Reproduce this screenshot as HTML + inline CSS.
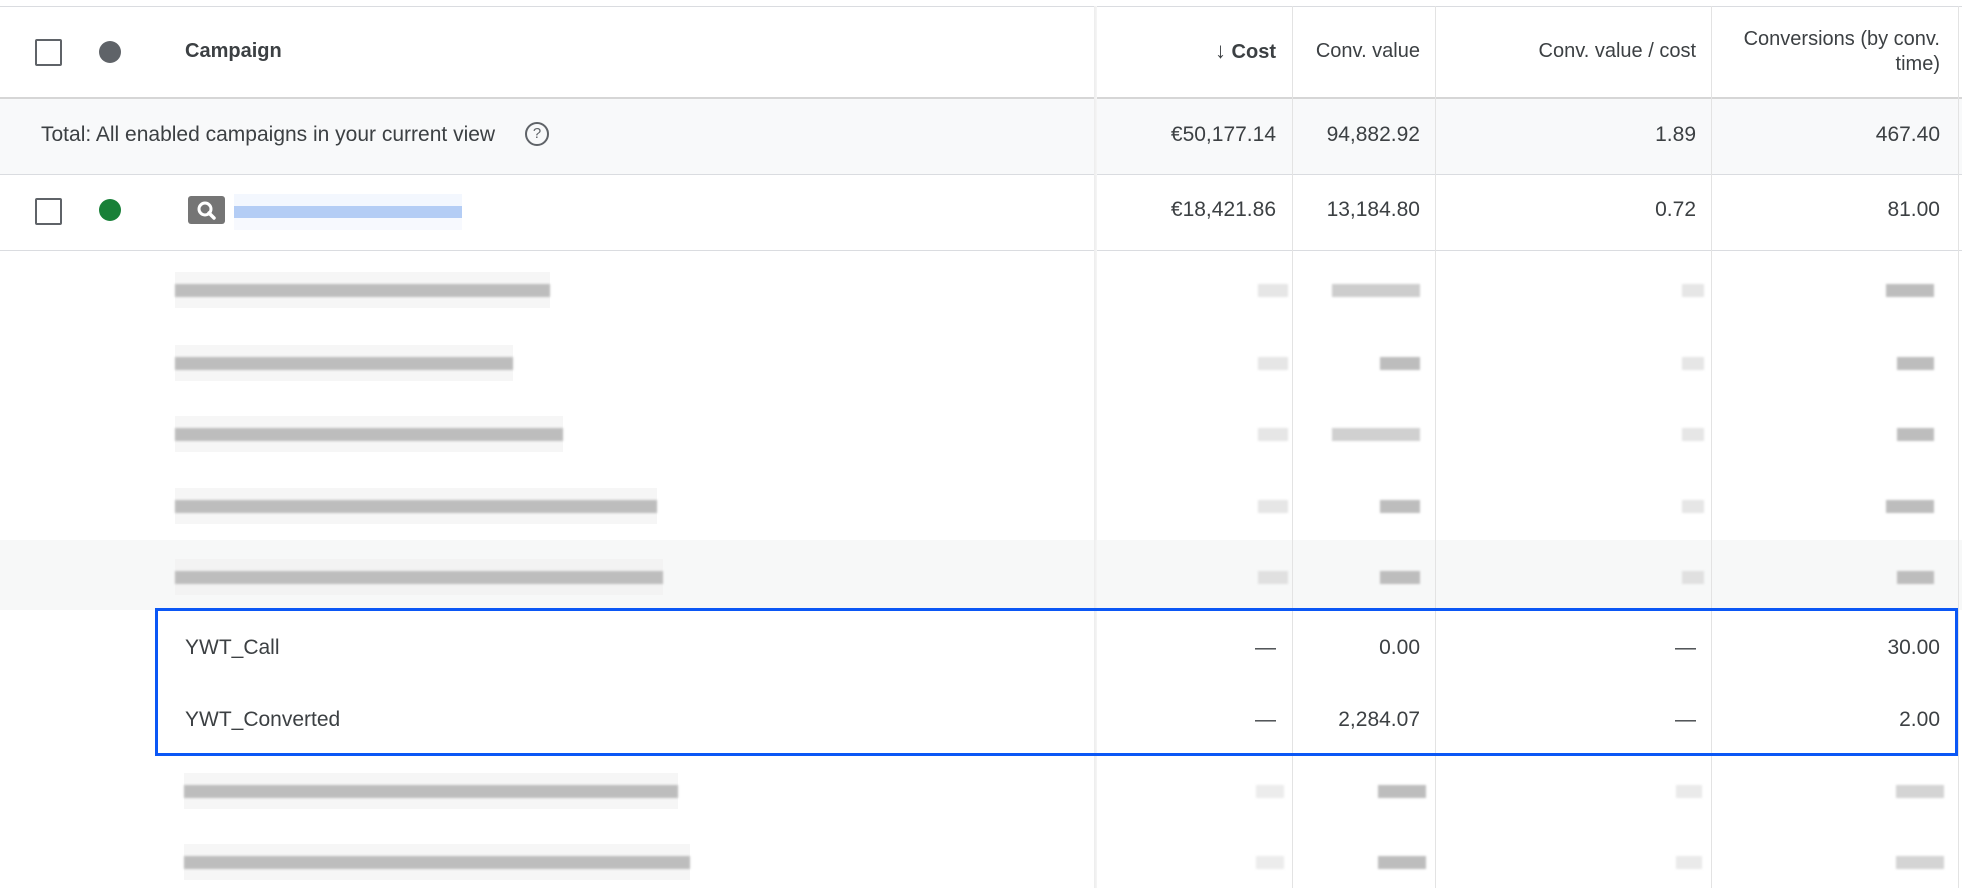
<!DOCTYPE html>
<html><head><meta charset="utf-8"><style>
body{margin:0;width:1962px;height:888px;overflow:hidden;background:#fff;font-family:"Liberation Sans",Arial,sans-serif;color:#3c4043;position:relative}
.a{position:absolute}
.hl{position:absolute;left:0;width:1962px;height:1px;background:#dadce0}
.vl{position:absolute;width:1px;background:#e3e3e3}
.t{position:absolute;font-size:21px;white-space:nowrap;line-height:24px}
.h{font-size:20px}
.r{text-align:right}
.cb{position:absolute;left:35px;width:23px;height:23px;border:2px solid #5f6368;border-radius:2px}
.bl{position:absolute;height:36px}
.bl i{position:absolute;left:0;right:0;top:12px;height:13px;background:#bdbdbd;filter:blur(1px)}
.bl b{position:absolute;left:0;right:0;top:0;height:36px;background:#f0f0f0;opacity:.6}
</style></head><body>
<div class="hl" style="top:6px"></div>
<div class="hl" style="top:97px;height:2px;background:#d6d6d6"></div>
<div class="a" style="left:0;top:99px;width:1962px;height:75px;background:#f8f9fa"></div>
<div class="hl" style="top:174px"></div>
<div class="hl" style="top:250px"></div>
<div class="a" style="left:0;top:540px;width:1962px;height:70px;background:#f7f8f8"></div>

<div class="a" style="left:1094px;top:6px;width:3px;height:882px;background:linear-gradient(90deg,#ececec,#f6f6f6)"></div>
<div class="vl" style="left:1292px;top:6px;height:882px"></div>
<div class="vl" style="left:1435px;top:6px;height:882px"></div>
<div class="vl" style="left:1711px;top:6px;height:882px"></div>
<div class="vl" style="left:1958px;top:6px;height:882px"></div>

<!-- header -->
<div class="cb" style="top:39px"></div>
<div class="a" style="left:99px;top:41px;width:22px;height:22px;border-radius:50%;background:#5f6368"></div>
<div class="t h" style="left:185px;top:39px;font-weight:bold;color:#3c4043">Campaign</div>
<div class="t h r" style="right:686px;top:39px;font-weight:bold"><span style="font-weight:normal;font-size:22px">↓</span> Cost</div>
<div class="t h r" style="right:542px;top:39px">Conv. value</div>
<div class="t h r" style="right:266px;top:39px">Conv. value / cost</div>
<div class="t h r" style="right:22px;top:27px;line-height:25px">Conversions (by conv.<br>time)</div>

<!-- total -->
<div class="t" style="left:41px;top:123px">Total: All enabled campaigns in your current view</div>
<div class="a" style="left:525px;top:122px;width:20px;height:20px;border:2px solid #5f6368;border-radius:50%;font-size:15px;text-align:center;line-height:20px;color:#5f6368">?</div>
<div class="t r" style="right:686px;top:123px">€50,177.14</div>
<div class="t r" style="right:542px;top:123px">94,882.92</div>
<div class="t r" style="right:266px;top:123px">1.89</div>
<div class="t r" style="right:22px;top:123px">467.40</div>

<!-- campaign row -->
<div class="cb" style="top:198px"></div>
<div class="a" style="left:99px;top:199px;width:22px;height:22px;border-radius:50%;background:#188038"></div>
<div class="a" style="left:188px;top:196px;width:37px;height:28px;background:#757575;border-radius:3px">
<svg width="37" height="28" viewBox="0 0 37 28"><circle cx="17" cy="13" r="6" fill="none" stroke="#fff" stroke-width="3"/><path d="M21 17l5 5" stroke="#fff" stroke-width="3.5" stroke-linecap="round"/></svg></div>
<div class="a" style="left:234px;top:194px;width:228px;height:36px;background:linear-gradient(180deg,#f3f7fe 0 12px,#b4cdf5 12px 24px,#f7f9fe 24px)"></div>
<div class="t r" style="right:686px;top:198px">€18,421.86</div>
<div class="t r" style="right:542px;top:198px">13,184.80</div>
<div class="t r" style="right:266px;top:198px">0.72</div>
<div class="t r" style="right:22px;top:198px">81.00</div>

<!-- blurred rows -->
<div class="bl" style="left:175px;top:272px;width:375px"><b></b><i></i></div>
<div class="bl" style="left:175px;top:345px;width:338px"><b></b><i></i></div>
<div class="bl" style="left:175px;top:416px;width:388px"><b></b><i></i></div>
<div class="bl" style="left:175px;top:488px;width:482px"><b></b><i></i></div>
<div class="bl" style="left:175px;top:559px;width:488px"><b></b><i></i></div>
<div class="bl" style="left:184px;top:773px;width:494px"><b></b><i></i></div>
<div class="bl" style="left:184px;top:844px;width:506px"><b></b><i></i></div>

<div class="bl" style="left:1258px;top:272px;width:30px"><i style="background:#e6e6e6"></i></div>
<div class="bl" style="left:1258px;top:345px;width:30px"><i style="background:#e6e6e6"></i></div>
<div class="bl" style="left:1258px;top:416px;width:30px"><i style="background:#e6e6e6"></i></div>
<div class="bl" style="left:1258px;top:488px;width:30px"><i style="background:#e6e6e6"></i></div>
<div class="bl" style="left:1258px;top:559px;width:30px"><i style="background:#e0e0e0"></i></div>
<div class="bl" style="left:1256px;top:773px;width:28px"><i style="background:#ececec"></i></div>
<div class="bl" style="left:1256px;top:844px;width:28px"><i style="background:#ececec"></i></div>

<div class="bl" style="left:1332px;top:272px;width:88px"><i style="background:#cdcdcd"></i></div>
<div class="bl" style="left:1380px;top:345px;width:40px"><i></i></div>
<div class="bl" style="left:1332px;top:416px;width:88px"><i style="background:#d0d0d0"></i></div>
<div class="bl" style="left:1380px;top:488px;width:40px"><i></i></div>
<div class="bl" style="left:1380px;top:559px;width:40px"><i></i></div>
<div class="bl" style="left:1378px;top:773px;width:48px"><i></i></div>
<div class="bl" style="left:1378px;top:844px;width:48px"><i></i></div>

<div class="bl" style="left:1682px;top:272px;width:22px"><i style="background:#e6e6e6"></i></div>
<div class="bl" style="left:1682px;top:345px;width:22px"><i style="background:#e6e6e6"></i></div>
<div class="bl" style="left:1682px;top:416px;width:22px"><i style="background:#e6e6e6"></i></div>
<div class="bl" style="left:1682px;top:488px;width:22px"><i style="background:#e6e6e6"></i></div>
<div class="bl" style="left:1682px;top:559px;width:22px"><i style="background:#e0e0e0"></i></div>
<div class="bl" style="left:1676px;top:773px;width:26px"><i style="background:#eaeaea"></i></div>
<div class="bl" style="left:1676px;top:844px;width:26px"><i style="background:#eaeaea"></i></div>

<div class="bl" style="left:1886px;top:272px;width:48px"><i></i></div>
<div class="bl" style="left:1897px;top:345px;width:37px"><i></i></div>
<div class="bl" style="left:1897px;top:416px;width:37px"><i></i></div>
<div class="bl" style="left:1886px;top:488px;width:48px"><i></i></div>
<div class="bl" style="left:1897px;top:559px;width:37px"><i></i></div>
<div class="bl" style="left:1896px;top:773px;width:48px"><i style="background:#d4d4d4"></i></div>
<div class="bl" style="left:1896px;top:844px;width:48px"><i style="background:#d4d4d4"></i></div>

<!-- highlighted rows -->
<div class="a" style="left:155px;top:608px;width:1797px;height:142px;border:3px solid #0b57f5"></div>
<div class="t" style="left:185px;top:636px">YWT_Call</div>
<div class="t r" style="right:686px;top:636px">—</div>
<div class="t r" style="right:542px;top:636px">0.00</div>
<div class="t r" style="right:266px;top:636px">—</div>
<div class="t r" style="right:22px;top:636px">30.00</div>
<div class="t" style="left:185px;top:708px">YWT_Converted</div>
<div class="t r" style="right:686px;top:708px">—</div>
<div class="t r" style="right:542px;top:708px">2,284.07</div>
<div class="t r" style="right:266px;top:708px">—</div>
<div class="t r" style="right:22px;top:708px">2.00</div>
</body></html>
